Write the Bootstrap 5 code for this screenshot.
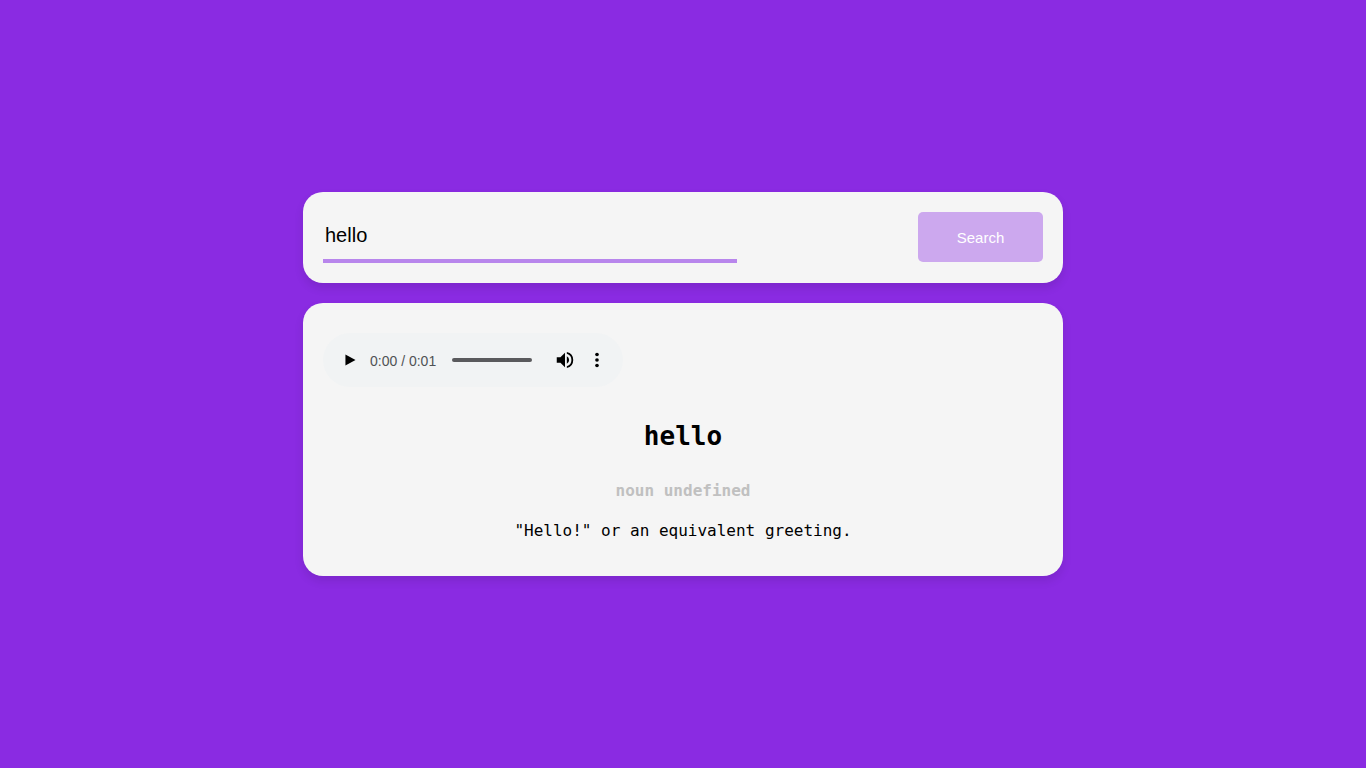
<!DOCTYPE html>
<html lang="en">
<head>
<meta charset="utf-8">
<meta name="viewport" content="width=device-width, initial-scale=1">
<title>Dictionary</title>
<link href="https://cdn.jsdelivr.net/npm/bootstrap@5.3.0/dist/css/bootstrap.min.css" rel="stylesheet">
<style>
body{background:#8a2be2;color:#000;font-family:"Liberation Sans",Arial,sans-serif}
.dict{max-width:760px;gap:20px}
.panel{background:#f5f5f5;border-radius:20px;padding:20px;box-shadow:0 5px 10px rgba(0,0,0,.1)}
.word-input{width:414px;height:51px;padding:0 2px;border:0;border-bottom:4px solid #b886ec;border-radius:0;background:transparent;font-size:20px;color:#000}
.word-input:focus{background:transparent;border-color:#b886ec;color:#000}
.search-btn,.search-btn:hover{width:125px;height:50px;padding:8px 12px 6px;border:0;border-radius:5px;background:#cca8ee;color:#fff;font-size:15px}
.player{max-width:300px;height:54px;border-radius:27px;background:#f1f3f4;margin:10px 0;padding:0 9px 0 11px}
.player button{width:32px;height:32px;padding:5px;border:0;color:#000}
.time{width:66px;margin-left:4px;font-size:14px;line-height:18px;padding-top:1px;color:#505255}
.seek{width:80px;height:4px;margin:0 17px 0 16px;appearance:none;border-radius:2px;background:#5a5a5d}
.seek::-webkit-slider-thumb{appearance:none;width:0;height:0}
.entry{font-family:Consolas,"DejaVu Sans Mono",monospace}
.entry h1{font-size:26px;line-height:40px;margin:29px 0 20px}
.entry h2,.entry p{font-size:16px;line-height:30px;margin-bottom:10px}
.entry h2{color:silver}
</style>
</head>
<body class="min-vh-100 d-flex align-items-center justify-content-center">
<main class="dict w-100 d-flex flex-column">
<form class="panel d-flex justify-content-between">
<input class="form-control word-input shadow-none" type="text" aria-label="Word" value="hello">
<button class="btn search-btn" type="button">Search</button>
</form>
<section class="panel">
<div class="player d-flex align-items-center" role="group" aria-label="Pronunciation">
<button class="btn d-flex" type="button" aria-label="Play"><svg width="22" height="22" viewBox="0 0 24 24" fill="currentColor"><path d="M7 6v12l11-6z"/></svg></button>
<span class="time text-nowrap">0:00 / 0:01</span>
<input class="seek" type="range" min="0" max="1" value="0" aria-label="Seek">
<button class="btn d-flex" type="button" aria-label="Mute"><svg width="22" height="22" viewBox="0 0 24 24" fill="currentColor"><path d="M3 9v6h4l5 5V4L7 9H3zm13.500 3A4.500 4.500 0 0 0 14 7.970v8.050A4.500 4.500 0 0 0 16.500 12zM14 3.230v2.060a7 7 0 0 1 0 13.420v2.060a9 9 0 0 0 0-17.540z"/></svg></button>
<button class="btn d-flex" type="button" aria-label="More options"><svg width="22" height="22" viewBox="0 0 24 24" fill="currentColor"><circle cx="12" cy="6" r="2"/><circle cx="12" cy="12" r="2"/><circle cx="12" cy="18" r="2"/></svg></button>
</div>
<div class="entry text-center">
<h1 class="fw-bold">hello</h1>
<h2 class="fw-bold">noun undefined</h2>
<p>"Hello!" or an equivalent greeting.</p>
</div>
</section>
</main>
<script src="https://cdn.jsdelivr.net/npm/bootstrap@5.3.0/dist/js/bootstrap.bundle.min.js"></script>
</body>
</html>
